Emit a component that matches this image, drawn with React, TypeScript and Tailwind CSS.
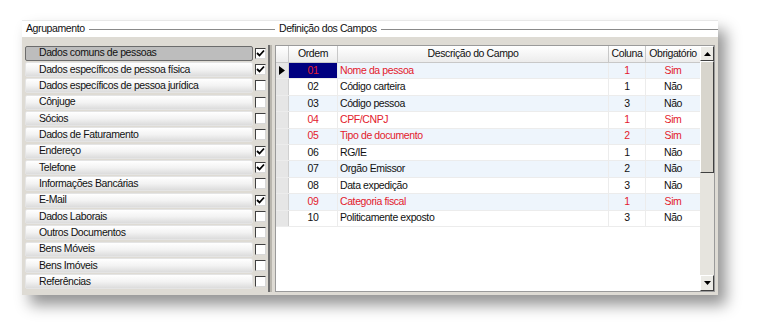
import React from 'react';

const grupos = [
  { nome: 'Dados comuns de pessoas', marcado: true },
  { nome: 'Dados específicos de pessoa física', marcado: true },
  { nome: 'Dados específicos de pessoa jurídica', marcado: false },
  { nome: 'Cônjuge', marcado: false },
  { nome: 'Sócios', marcado: false },
  { nome: 'Dados de Faturamento', marcado: false },
  { nome: 'Endereço', marcado: true },
  { nome: 'Telefone', marcado: true },
  { nome: 'Informações Bancárias', marcado: false },
  { nome: 'E-Mail', marcado: true },
  { nome: 'Dados Laborais', marcado: false },
  { nome: 'Outros Documentos', marcado: false },
  { nome: 'Bens Móveis', marcado: false },
  { nome: 'Bens Imóveis', marcado: false },
  { nome: 'Referências', marcado: false },
];

const campos = [
  { ordem: '01', desc: 'Nome da pessoa', coluna: '1', obrig: true },
  { ordem: '02', desc: 'Código carteira', coluna: '1', obrig: false },
  { ordem: '03', desc: 'Código pessoa', coluna: '3', obrig: false },
  { ordem: '04', desc: 'CPF/CNPJ', coluna: '1', obrig: true },
  { ordem: '05', desc: 'Tipo de documento', coluna: '2', obrig: true },
  { ordem: '06', desc: 'RG/IE', coluna: '1', obrig: false },
  { ordem: '07', desc: 'Orgão Emissor', coluna: '2', obrig: false },
  { ordem: '08', desc: 'Data expedição', coluna: '3', obrig: false },
  { ordem: '09', desc: 'Categoria fiscal', coluna: '1', obrig: true },
  { ordem: '10', desc: 'Politicamente exposto', coluna: '3', obrig: false },
];

const Check = ({ on }: { on: boolean }) => (
  <div className="w-[11px] h-[11px] bg-white border-t border-l border-[#404040] border-r border-b border-r-[#d8d8d8] border-b-[#d8d8d8] flex items-center justify-center">
    {on && (
      <svg width="9" height="9" viewBox="0 0 9 9">
        <path d="M1 4 L3.5 6.5 L8 1.5" stroke="#000" strokeWidth="1.8" fill="none" />
      </svg>
    )}
  </div>
);

const SectionTitle = ({ label, className }: { label: string; className?: string }) => (
  <div className={`flex items-center gap-[4px] ${className ?? ''}`}>
    <span>{label}</span>
    <div className="flex-1 h-px bg-[#8a8a8a]" />
  </div>
);

export default function App() {
  return (
    <div className="w-[760px] h-[336px] bg-white pt-[20px] pl-[22px] text-[10.5px] tracking-[-0.4px] text-[#111]" style={{ fontFamily: '"Liberation Sans", Arial, sans-serif' }}>
      <div className="w-[696px] h-[275px] flex flex-col bg-[#dedbd4] shadow-[8px_10px_14px_rgba(0,0,0,0.42)]">
        {/* Cabeçalho */}
        <div className="h-[17px] bg-white flex items-center pl-[4px] border-t border-[#e8e8e8]">
          <SectionTitle label="Agrupamento" className="w-[249px]" />
          <SectionTitle label="Definição dos Campos" className="flex-1 pl-[4px]" />
        </div>

        <div className="flex flex-1 pt-[8px] pl-[3px] pb-[3px]">
          {/* Lista de agrupamentos */}
          <div className="flex flex-col w-[242px]">
            {grupos.map((g, i) => (
              <div key={g.nome} className="h-[16.35px] flex items-center">
                <div
                  className={`w-[228px] h-[15px] rounded-[2px] flex items-center pl-[13px] ${
                    i === 0
                      ? 'bg-[#bdbdbd] border border-[#6c6c6c]'
                      : 'bg-gradient-to-b from-[#ffffff] via-[#f3f3f3] to-[#dcdcdc] border border-[#e4e4e4]'
                  }`}
                >
                  {g.nome}
                </div>
                <div className="ml-[2px]">
                  <Check on={g.marcado} />
                </div>
              </div>
            ))}
          </div>

          {/* Divisor */}
          <div className="w-[6px] flex">
            <div className="w-[2px] bg-[#6e6e6e] ml-[1px]" />
            <div className="w-[2px] bg-[#b9b6ae]" />
          </div>

          {/* Grade */}
          <div className="ml-[2px] w-[440px] border border-[#9a9a9a] bg-white flex">
            <div className="flex-1 flex flex-col">
              <div className="h-[17px] flex bg-gradient-to-b from-[#ffffff] to-[#ececec] border-b border-[#c8c8c8]">
                <div className="w-[13px] border-r border-[#c8c8c8]" />
                <div className="w-[49px] border-r border-[#c8c8c8] flex items-center justify-center">Ordem</div>
                <div className="w-[271px] border-r border-[#c8c8c8] flex items-center justify-center">Descrição do Campo</div>
                <div className="w-[37px] border-r border-[#c8c8c8] flex items-center justify-center">Coluna</div>
                <div className="flex-1 flex items-center justify-center">Obrigatório</div>
              </div>
              {campos.map((c, i) => {
                const red = c.obrig ? 'text-[#e3202c]' : '';
                return (
                  <div key={c.ordem} className={`h-[16.4px] flex border-b border-[#ececec] ${i % 2 === 0 ? 'bg-[#eef5fc]' : 'bg-white'}`}>
                    <div className="w-[13px] bg-[#e6e6e6] border-r border-[#d0d0d0] flex items-center justify-center">
                      {i === 0 && (
                        <svg width="6" height="9" viewBox="0 0 6 9">
                          <path d="M0 0 L6 4.5 L0 9 Z" fill="#000" />
                        </svg>
                      )}
                    </div>
                    <div className={`w-[49px] border-r border-[#ececec] flex items-center justify-center ${i === 0 ? 'bg-[#000080] text-[#e3202c]' : red}`}>{c.ordem}</div>
                    <div className={`w-[271px] border-r border-[#ececec] flex items-center pl-[2px] ${red}`}>{c.desc}</div>
                    <div className={`w-[37px] border-r border-[#ececec] flex items-center justify-center ${red}`}>{c.coluna}</div>
                    <div className={`flex-1 flex items-center justify-center ${red}`}>{c.obrig ? 'Sim' : 'Não'}</div>
                  </div>
                );
              })}
            </div>

            {/* Barra de rolagem */}
            <div className="w-[14px] bg-[#e6e4de] flex flex-col">
              <div className="h-[15px] bg-[#ecebe6] border border-t-white border-l-white border-r-[#404040] border-b-[#404040] flex items-center justify-center">
                <svg width="7" height="4" viewBox="0 0 7 4"><path d="M0 4 L3.5 0 L7 4 Z" fill="#000" /></svg>
              </div>
              <div className="h-[112px] bg-[#d8d5cd] border border-t-white border-l-white border-r-[#404040] border-b-[#404040]" />
              <div className="flex-1" />
              <div className="h-[16px] bg-[#ecebe6] border border-t-white border-l-white border-r-[#404040] border-b-[#404040] flex items-center justify-center">
                <svg width="7" height="4" viewBox="0 0 7 4"><path d="M0 0 L7 0 L3.5 4 Z" fill="#000" /></svg>
              </div>
            </div>
          </div>
        </div>
      </div>
    </div>
  );
}
